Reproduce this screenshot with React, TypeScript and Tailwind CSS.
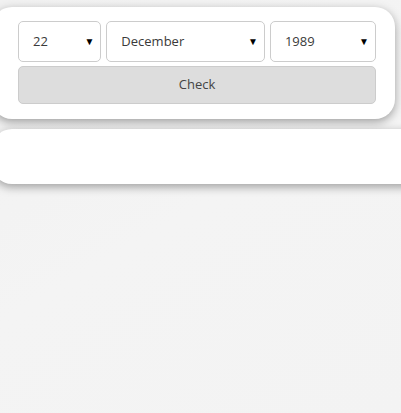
import React from "react";

function Sel({ value, className }: { value: string; className: string }) {
  return (
    <div
      className={`h-[41px] flex items-center justify-between rounded-[5px] border border-[#cccccc] bg-white pl-[14px] pr-[6px] text-[13px] text-[#3a3a3a] ${className}`}
    >
      <span>{value}</span>
      <span className="text-[10px] text-black">▼</span>
    </div>
  );
}

export default function App() {
  return (
    <div
      className="min-h-[413px] w-full overflow-hidden bg-[linear-gradient(150deg,#f1f1f1,#f4f4f4_50%,#f3f3f3)] pt-[7px]"
      style={{ fontFamily: "'Open Sans', Lato, sans-serif" }}
    >
      <div className="ml-[-8px] w-[403px] rounded-[20px] bg-white pl-[26px] pr-[19px] pt-[14px] pb-[15px] shadow-[0_3px_10px_rgba(0,0,0,0.35)]">
        <div className="flex gap-[5px]">
          <Sel value="22" className="w-[84px]" />
          <Sel value="December" className="w-[160px]" />
          <Sel value="1989" className="w-[107px]" />
        </div>
        <button className="mt-[4px] h-[38px] w-full rounded-[5px] border border-[#cccccc] bg-[#dddddd] text-[13px] text-[#444]">
          Check
        </button>
      </div>
      <div className="mt-[10px] ml-[-8px] h-[55px] w-[440px] rounded-[20px] bg-white shadow-[0_3px_10px_rgba(0,0,0,0.35)]" />
    </div>
  );
}
